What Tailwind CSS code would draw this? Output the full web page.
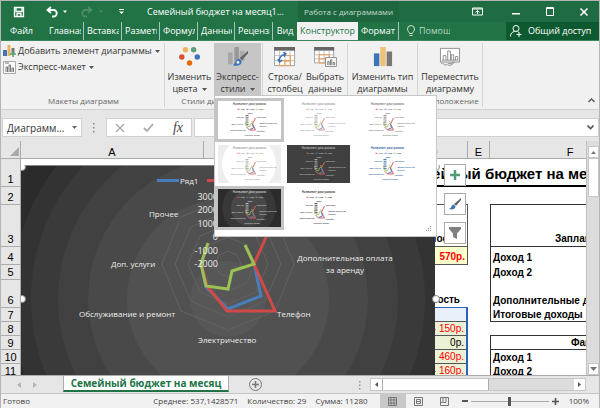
<!DOCTYPE html>
<html lang="ru">

<head>
    <meta charset="UTF-8">
    <meta name="viewport" content="width=device-width, initial-scale=1.0">
    <title>Семейный бюджет на месяц</title>
    <script src="https://cdn.jsdelivr.net/npm/@tailwindcss/browser@4"></script>
</head>

<body class="h-screen flex flex-col overflow-hidden border-t border-x border-[#b5b5b5] bg-[#e6e6e6] font-['Open_Sans',sans-serif] text-[9px] leading-3 text-[#333]">

    <!-- title bar + tabs -->
    <header class="shrink-0 bg-[#217346] text-white">
        <div class="flex h-[21px] items-center">
            <div class="flex w-[146px] shrink-0 items-center pl-3">
                <button aria-label="Сохранить">
                    <svg width="12" height="12" viewBox="0 0 12 12" fill="none" stroke="#fff" stroke-width="1.3">
                        <path d="M1.5 1.5h9v9h-9z M3 1.5v4h6v-4 M4 10.500v-3h4v3" />
                    </svg>
                </button>
                <button aria-label="Отменить" class="ml-5">
                    <svg width="24" height="12" viewBox="0 0 24 12" fill="none" stroke="#fff" stroke-width="1.8">
                        <path d="M6 1 2.500 4l3.500 3M3 4h5.500a3 3 0 0 1 0 6.500H7" />
                        <path d="M18 4.500h4l-2 2.500z" fill="#fff" stroke="none" />
                    </svg>
                </button>
                <button aria-label="Повторить" class="ml-3">
                    <svg width="24" height="12" viewBox="0 0 24 12" fill="none" stroke="#4c8c68" stroke-width="1.8">
                        <path d="M7 1l3.500 3L7 7M10 4H4.500a3 3 0 0 0 0 6.500H6" />
                        <path d="M18 4.500h4l-2 2.500z" fill="#4c8c68" stroke="none" />
                    </svg>
                </button>
                <button aria-label="Настройка панели" class="ml-3">
                    <svg width="8" height="12" viewBox="0 0 8 12" fill="#fff">
                        <path d="M2 3h5v1H2zM2 5.500h5L4.500 8z" />
                    </svg>
                </button>
            </div>
            <h1 class="w-[151px] shrink-0 whitespace-nowrap">Семейный бюджет на месяц1...</h1>
            <div class="flex h-full w-[101px] shrink-0 items-center justify-center whitespace-nowrap bg-[#1e6640] text-[8px] text-[#c3dccd]">Работа с диаграммами</div>
            <div class="flex h-full grow items-center justify-end gap-6 bg-[#1f6b42] pr-[10px]">
                <button aria-label="Параметры отображения ленты">
                    <svg width="11" height="9" viewBox="0 0 11 9" fill="none" stroke="#fff">
                        <path d="M.5 1h10v7H.5zM.5 2h10M5.500 7V4M3.500 5.500l2-2 2 2" />
                    </svg>
                </button>
                <button aria-label="Свернуть" class="ml-1">
                    <svg width="10" height="10" viewBox="0 0 10 10"><path d="M1 6h8v1.500H1z" fill="#fff" /></svg>
                </button>
                <button aria-label="Развернуть">
                    <svg width="10" height="9" viewBox="0 0 10 9" fill="none" stroke="#fff"><path d="M1.500.500h7v8h-7zM1.500 1.500h7" /></svg>
                </button>
                <button aria-label="Закрыть">
                    <svg width="10" height="10" viewBox="0 0 10 10" stroke="#fff" stroke-width="1.6"><path d="M1.500 1.500l7 7M8.500 1.500l-7 7" /></svg>
                </button>
            </div>
        </div>

        <nav class="flex h-[19px] items-stretch whitespace-nowrap border-b border-[#3f8560]">
            <button class="w-[45px] shrink-0 pr-3 pl-2">Файл</button>
            <button class="w-[38px] shrink-0 border-r border-white/60 pr-[2px] pl-[3px] text-left"><span class="block overflow-hidden">Главная</span></button>
            <button class="w-[38px] shrink-0 border-r border-white/60 pr-[2px] pl-[3px] text-left"><span class="block overflow-hidden">Вставка</span></button>
            <button class="w-[38px] shrink-0 border-r border-white/60 pr-[2px] pl-[3px] text-left"><span class="block overflow-hidden">Разметка</span></button>
            <button class="w-[38px] shrink-0 border-r border-white/60 pr-[2px] pl-[3px] text-left"><span class="block overflow-hidden">Формулы</span></button>
            <button class="w-[37px] shrink-0 border-r border-white/60 pr-[2px] pl-[3px] text-left"><span class="block overflow-hidden">Данные</span></button>
            <button class="w-[38px] shrink-0 border-r border-white/60 pr-[2px] pl-[3px] text-left"><span class="block overflow-hidden">Рецензирование</span></button>
            <button class="w-[24px] shrink-0">Вид</button>
            <button class="w-[61px] shrink-0 bg-[#f1f1f1] text-[#217346]">Конструктор</button>
            <button class="w-[41px] shrink-0 border-r border-white/60">Формат</button>
            <button class="flex shrink-0 items-center gap-1 pl-2 text-[#b9d6c6]">
                <svg width="8" height="12" viewBox="0 0 8 12" fill="none" stroke="#cfe3d8">
                    <path d="M2.500 8.500c0-1.500-2-2-2-4.500a3.500 3.500 0 0 1 7 0c0 2.500-2 3-2 4.500zM2.500 10.500h3" />
                </svg>
                <span class="w-[31px] overflow-hidden text-left">Помощь</span>
            </button>
            <button class="ml-auto flex w-[93px] shrink-0 items-center gap-[6px] bg-[#0e5a30] pl-1">
                <svg width="12" height="12" viewBox="0 0 12 12" fill="none" stroke="#fff">
                    <circle cx="6" cy="3.500" r="3" />
                    <path d="M.5 11.500C.5 8.500 2 7 4.500 6.500M7.500 6.500l1 .5M6.500 9.500h5M9 7v5" />
                </svg>
                Общий доступ
            </button>
        </nav>
    </header>

    <!-- ribbon -->
    <section class="relative flex h-[69px] shrink-0 border-b border-[#d2d2d2] bg-[#f1f1f1] py-[2px]">
        <div class="flex w-[164px] shrink-0 flex-col border-r border-[#d5d5d5] pl-[2px]">
            <button class="flex h-4 items-center gap-[2px] whitespace-nowrap">
                <svg class="shrink-0" width="13" height="12" viewBox="0 0 13 12">
                    <path d="M0 5h4v6H0z" fill="#3e74b8" />
                    <path d="M4.500 0h3v11h-3z" fill="#edb35a" />
                    <path d="M8.500 3h3v5h-3z" fill="#777" />
                    <path d="M10 6v6M7 9h6" stroke="#4aa070" stroke-width="1.500" />
                </svg>
                Добавить элемент диаграммы
                <svg class="ml-px shrink-0" width="5" height="3" viewBox="0 0 5 3"><path d="M0 0h5L2.500 3z" fill="#555" /></svg>
            </button>
            <button class="flex h-4 items-center gap-[2px] whitespace-nowrap">
                <svg class="shrink-0" width="13" height="13" viewBox="0 0 13 13">
                    <path d="M.5.500h12v12H.5z" fill="#fafafa" stroke="#aaa" />
                    <path d="M2 2h4M3 11V6h1.500v5M6 11V4h1.500v7M9 11V7h1.500v4" fill="none" stroke="#777" />
                </svg>
                Экспресс-макет
                <svg class="ml-px shrink-0" width="5" height="3" viewBox="0 0 5 3"><path d="M0 0h5L2.500 3z" fill="#555" /></svg>
            </button>
            <p class="mt-auto text-center text-[8px] text-[#666]">Макеты диаграмм</p>
        </div>

        <div class="flex w-[98px] shrink-0 flex-col border-r border-[#d5d5d5]">
            <div class="flex h-[52px]">
                <button class="flex w-[49px] flex-col items-center text-center">
                    <svg class="mt-1 mb-1" width="26" height="22" viewBox="0 0 26 22">
                        <circle cx="8" cy="3" r="3" fill="#edb35a" />
                        <circle cx="17" cy="3" r="3" fill="#5f9f7e" />
                        <circle cx="4" cy="11" r="3" fill="#d9502e" />
                        <circle cx="21" cy="11" r="3" fill="#3e74b8" />
                        <circle cx="12.500" cy="17.500" r="3" fill="#e36c0a" />
                    </svg>
                    Изменить<span class="flex items-center gap-1">цвета <svg width="5" height="3" viewBox="0 0 5 3"><path d="M0 0h5L2.500 3z" fill="#555" /></svg></span>
                </button>
                <button class="flex w-[47px] flex-col items-center whitespace-nowrap bg-[#c6c6c6] text-center">
                    <svg class="mt-1 mb-1" width="24" height="22" viewBox="0 0 24 22">
                        <path d="M1 6h5v13H1z" fill="#a8a8a8" />
                        <path d="M8 0h5v19H8z" fill="#999" />
                        <path d="M14 4h5v11h-5z" fill="#aaa" />
                        <path d="M23 4 14 12l2.500 2.500L23 7z" fill="#666" />
                        <path d="M13.500 13c-4 0-3 4-7 7 4 1.500 10 .5 9.500-4.500z" fill="#3e74b8" />
                        <circle cx="12" cy="17" r="1.500" fill="#fff" />
                    </svg>
                    Экспресс-<span class="flex items-center gap-1">стили <svg width="5" height="3" viewBox="0 0 5 3"><path d="M0 0h5L2.500 3z" fill="#555" /></svg></span>
                </button>
            </div>
            <p class="mt-auto text-center text-[8px] text-[#666]">Стили диаграмм</p>
        </div>

        <div class="flex w-[85px] shrink-0 flex-col border-r border-[#d5d5d5]">
            <div class="flex h-[52px] pl-[2px]">
                <button class="flex w-[40px] flex-col items-center text-center">
                    <svg class="mt-1 mb-1" width="24" height="22" viewBox="0 0 24 22" fill="none">
                        <path d="M.5.500h22v20H.5z" fill="#fff" stroke="#999" />
                        <path d="M0 0h23v4H0z" fill="#666" />
                        <path d="M.5 9.500h22M.5 15h22M6 4v16M12 4v16M17.500 4v16" stroke="#bbb" />
                        <path d="M12 9.500h6v6h-6v5M6 15h12v5.500H6z" stroke="#ec9a4c" />
                        <path d="M6 16c-1-5 2-7 6-8M10 6l3 1.500-2 3M4 13.500l2 3 3-2" stroke="#3e74b8" stroke-width="1.600" />
                    </svg>
                    Строка/ столбец
                </button>
                <button class="flex w-[40px] flex-col items-center text-center">
                    <svg class="mt-1 mb-1" width="25" height="22" viewBox="0 0 25 22" fill="none">
                        <path d="M.5.500h21v17H.5z" fill="#fff" stroke="#999" />
                        <path d="M0 0h22v4H0z" fill="#666" />
                        <path d="M.5 8.500h21M.5 13h21M5.500 4v13M11 4v13M16.500 4v13" stroke="#bbb" />
                        <path d="M5.500 8.500h11v9h-11zM5.500 13H12" stroke="#ec9a4c" />
                        <path d="M12.500 11.500h12v10h-12z" fill="#fafafa" stroke="#888" />
                        <path d="M15 20v-4h1.500v4M18 20v-6h1.500v6M21 20v-3h1.500v3" stroke="#777" />
                    </svg>
                    Выбрать данные
                </button>
            </div>
        </div>

        <div class="flex w-[70px] shrink-0 flex-col border-r border-[#d5d5d5]">
            <button class="flex h-[52px] flex-col items-center text-center">
                <svg class="mt-1 mb-1" width="20" height="22" viewBox="0 0 20 22">
                    <path d="M0 7h6v14H0z" fill="#3e74b8" />
                    <path d="M7 0h6v21H7z" fill="#f0c078" />
                    <path d="M14 5h6v16h-6z" fill="#777" />
                </svg>
                Изменить тип диаграммы
            </button>
        </div>

        <div class="flex w-[65px] shrink-0 flex-col border-r border-[#d5d5d5]">
            <button class="flex h-[52px] flex-col items-center text-center">
                <svg class="mt-1 mb-1" width="22" height="22" viewBox="0 0 22 22" fill="none" stroke="#888">
                    <path d="M.5 1.500h21v15H.5z" fill="#fff" />
                    <path d="M3.500 14.500v-5h3v5M8.500 14.500v-10h3v10M12.500 14.500v-6h2.500v6M17 14.500v-4h2.500v4M2 14.500h18" />
                    <path d="M1 17.500c3 0 3 2.500 6 2.500l2-2h4l2-2M9 20h3l4-3" />
                </svg>
                Переместить диаграмму
            </button>
            <p class="mt-auto text-center text-[8px] text-[#666]">Расположение</p>
        </div>

        <button aria-label="Свернуть ленту" class="mt-auto mr-1 mb-1 ml-auto">
            <svg width="7" height="5" viewBox="0 0 7 5" fill="none" stroke="#555" stroke-width="1.300"><path d="M.5 4l3-3 3 3" /></svg>
        </button>

        <!-- chart style gallery -->
        <div class="absolute top-[54px] left-[213px] z-20 h-[142px] w-[223px] border border-[#c6c6c6] bg-white pt-[2px]">
            <svg class="hidden">
                <symbol id="mini-chart" viewBox="0 0 62 38">
                    <g font-size="2" fill="currentColor" font-family="Open Sans" font-weight="600">
                        <text x="31" y="4" font-size="3" text-anchor="middle">Название диаграммы</text>
                        <text x="22" y="9">Ряд1</text>
                        <text x="31" y="9">Ряд2</text>
                        <text x="40" y="9">Ряд3</text>
                        <text x="29" y="13">Вода</text>
                        <text x="18" y="17">Прочее</text>
                        <text x="38" y="17">Квартира</text>
                        <text x="13" y="24">Доп. услуги</text>
                        <text x="41" y="23">Дополнительная</text>
                        <text x="41" y="26">оплата</text>
                        <text x="12" y="30">Обслуживание</text>
                        <text x="38" y="31">Телефон</text>
                        <text x="26" y="35">Электричество</text>
                    </g>
                    <path d="M28.500 14v11" stroke="currentColor" stroke-width="3" stroke-dasharray="1 .8" opacity=".8" />
                    <g fill="none">
                        <path d="M19 8.300h2M37 17l-3 6 3 6h-6l-3-3" stroke="#d9605c" />
                        <path d="M34 23l1 4-4 1.500" stroke="#4f81bd" />
                        <path d="M27 21l1 4 3 1 1-3 2-1-1-2" stroke="#9bbb59" stroke-width=".8" />
                        <path d="M28 8.300h2" stroke="#4f81bd" stroke-width=".8" />
                        <path d="M37 8.300h2" stroke="#9bbb59" stroke-width=".8" />
                    </g>
                </symbol>
            </svg>
            <div class="grid w-[207px] grid-cols-3">
                <button aria-label="Стиль 1" class="h-11 bg-[#c4c4c4] p-[3px]"><svg class="size-full bg-white text-[#555]"><use href="#mini-chart" /></svg></button>
                <button aria-label="Стиль 2" class="h-11 p-[3px]"><svg class="size-full text-[#777] opacity-70"><use href="#mini-chart" /></svg></button>
                <button aria-label="Стиль 3" class="h-11 p-[3px]"><svg class="size-full text-[#777]"><use href="#mini-chart" /></svg></button>
                <button aria-label="Стиль 4" class="h-11 p-[3px]"><svg class="size-full bg-[#eee] text-[#888]"><circle cx="31" cy="19" r="27" fill="#fff" /><use href="#mini-chart" opacity=".8" /></svg></button>
                <button aria-label="Стиль 5" class="h-11 p-[3px]"><svg class="size-full bg-[#404040] text-[#bbb]"><use href="#mini-chart" /></svg></button>
                <button aria-label="Стиль 6" class="h-11 p-[3px]"><svg class="size-full text-[#1f5c99]"><use href="#mini-chart" /></svg></button>
                <button aria-label="Стиль 7" class="h-11 bg-[#c4c4c4] p-[3px]"><svg class="size-full bg-[#2b2b2b] text-[#ccc]"><circle cx="31" cy="19" r="27" fill="#383838" /><circle cx="31" cy="19" r="18" fill="#484848" /><use href="#mini-chart" /></svg></button>
                <button aria-label="Стиль 8" class="h-11 p-[3px]"><svg class="size-full text-[#333]"><use href="#mini-chart" /></svg></button>
            </div>
            <svg class="absolute right-1 bottom-1" width="6" height="6" viewBox="0 0 6 6" fill="#999"><path d="M4 0h1v1H4zM4 4h1v1H4zM2 2h1v1H2zM0 4h1v1H0zM2 4h1v1H2zM4 2h1v1H4z" /></svg>
        </div>
    </section>

    <!-- formula bar -->
    <section class="flex h-[31px] shrink-0 pt-2 pb-[4px] pl-px">
        <div class="flex h-[19px] w-[80px] shrink-0 items-center border border-[#d0d0d0] bg-white pr-1">
            <input type="text" aria-label="Имя" value="Диаграмм..." class="w-0 grow pl-1 text-[10px] text-[#333]">
            <button aria-label="Список имён"><svg width="5" height="3" viewBox="0 0 5 3"><path d="M0 0h5L2.500 3z" fill="#666" /></svg></button>
        </div>
        <svg class="mx-[9px] shrink-0" width="6" height="19" viewBox="0 0 6 19" fill="#888"><path d="M2 5h1.500v1.500H2zM2 9h1.500v1.500H2zM2 13h1.500v1.500H2z" /></svg>
        <div class="flex h-[19px] w-[86px] shrink-0 items-center justify-between border border-[#d0d0d0] bg-white px-2">
            <button aria-label="Отмена"><svg width="10" height="10" viewBox="0 0 10 10" stroke="#aaa" stroke-width="1.300"><path d="M1 1l8 8M9 1L1 9" /></svg></button>
            <button aria-label="Ввод"><svg width="11" height="9" viewBox="0 0 11 9" fill="none" stroke="#aaa" stroke-width="1.800"><path d="M1 5l3 3 6-7" /></svg></button>
            <button class="font-['Liberation_Serif',serif] text-[14px] italic text-[#444]">fx</button>
        </div>
        <div class="ml-[2px] flex h-[19px] grow items-center border border-[#d0d0d0] bg-white pr-1">
            <input type="text" aria-label="Строка формул" class="w-0 grow">
            <button aria-label="Развернуть строку формул"><svg width="7" height="5" viewBox="0 0 7 5" fill="none" stroke="#555" stroke-width="1.600"><path d="M.5.500l3 3 3-3" /></svg></button>
        </div>
    </section>

    <!-- sheet -->
    <main class="flex min-h-0 grow">
        <div class="relative min-w-0 grow overflow-hidden bg-white font-['Liberation_Sans',sans-serif] text-[10px] text-black">
            <table class="w-full table-fixed border-separate border-spacing-0 whitespace-nowrap">
                <colgroup>
                    <col class="w-[20px]">
                    <col class="w-[183px]">
                    <col class="w-[106px]">
                    <col class="w-[90px]">
                    <col class="w-[68px]">
                    <col class="w-[22px]">
                    <col>
                </colgroup>
                <thead>
                    <tr class="h-[18px] bg-[#e6e6e6] text-[11px] *:border-b *:border-[#ababab] *:p-0 *:pt-1 *:font-normal">
                        <th class="border-r"><svg class="ml-auto" width="10" height="9" viewBox="0 0 10 9"><path d="M9 0v9H0z" fill="#aaa" /></svg></th>
                        <th class="border-r">A</th>
                        <th class="border-r">B</th>
                        <th class="border-r">C</th>
                        <th class="border-r">D</th>
                        <th class="border-r">E</th>
                        <th class="pl-16!">F</th>
                    </tr>
                </thead>
                <tbody class="align-bottom font-bold">
                    <tr class="h-[28px] *:p-0 *:pb-px">
                        <th class="border-r border-b border-[#ababab] bg-[#e6e6e6] text-[11px] font-normal">1</th>
                        <td colspan="3" class="border-b-2"></td>
                        <td class="border-b-2 pl-[2px]! text-[15px] leading-5">Семейный бюджет на месяц</td>
                        <td class="border-b-2"></td>
                        <td class="border-b-2"></td>
                    </tr>
                    <tr class="h-[18px] *:p-0 *:pb-px">
                        <th class="border-r border-b border-[#ababab] bg-[#e6e6e6] text-[11px] font-normal">2</th>
                        <td colspan="3"></td>
                        <td class="border-b border-[#555]"></td>
                        <td></td>
                        <td class="border-b border-[#333]"></td>
                    </tr>
                    <tr class="h-[42px] *:p-0 *:pb-px">
                        <th class="border-r border-b border-[#ababab] bg-[#e6e6e6] text-[11px] font-normal">3</th>
                        <td colspan="3"></td>
                        <td class="border-r border-b border-[#555] pr-2! text-right">Разность</td>
                        <td></td>
                        <td class="border-b border-l border-[#333] pl-16!">Запланировано</td>
                    </tr>
                    <tr class="h-[18px] *:p-0 *:pb-px">
                        <th class="border-r border-b border-[#ababab] bg-[#e6e6e6] text-[11px] font-normal">4</th>
                        <td colspan="3"></td>
                        <td class="border-r border-b border-[#555] bg-[#ffffcc] pr-[2px]! text-right text-[#f00]">570р.</td>
                        <td></td>
                        <td class="border-l border-[#333] pl-[2px]!">Доход 1</td>
                    </tr>
                    <tr class="h-[15px] *:p-0 *:pb-px">
                        <th class="border-r border-b border-[#ababab] bg-[#e6e6e6] text-[11px] font-normal">5</th>
                        <td colspan="3"></td>
                        <td></td>
                        <td></td>
                        <td class="border-l border-[#333] pl-[2px]!">Доход 2</td>
                    </tr>
                    <tr class="h-[28px] *:p-0 *:pb-px">
                        <th class="border-r border-b border-[#ababab] bg-[#e6e6e6] text-[11px] font-normal">6</th>
                        <td colspan="3"></td>
                        <td class="border-b border-[#2a62c4] pr-2! text-right">Разность</td>
                        <td></td>
                        <td class="border-l border-[#333] pl-[2px]!">Дополнительные доходы</td>
                    </tr>
                    <tr class="h-[14px] *:p-0">
                        <th class="border-r border-b border-[#ababab] bg-[#e6e6e6] text-[11px] font-normal">7</th>
                        <td colspan="3"></td>
                        <td class="border-r-2 border-b border-r-[#2a62c4] border-b-[#555] bg-[#e9f0fa]"></td>
                        <td></td>
                        <td class="border-b border-l border-[#333] pl-[2px]!">Итоговые доходы</td>
                    </tr>
                    <tr class="h-[14px] *:p-0">
                        <th class="border-r border-b border-[#ababab] bg-[#e6e6e6] text-[11px] font-normal">8</th>
                        <td colspan="3"></td>
                        <td class="border-r-2 border-b border-r-[#2a62c4] border-b-[#555] bg-[#ebf1d5] pr-[2px]! text-right font-normal text-[#f00]">- 150р.</td>
                        <td></td>
                        <td class="border-b border-[#333]"></td>
                    </tr>
                    <tr class="h-[14px] *:p-0">
                        <th class="border-r border-b border-[#ababab] bg-[#e6e6e6] text-[11px] font-normal">9</th>
                        <td colspan="3"></td>
                        <td class="border-r-2 border-b border-r-[#2a62c4] border-b-[#555] bg-[#ebf1d5] pr-[2px]! text-right font-normal">0р.</td>
                        <td></td>
                        <td class="border-b border-l border-[#333] pl-20!">Фактически</td>
                    </tr>
                    <tr class="h-[14px] *:p-0">
                        <th class="border-r border-b border-[#ababab] bg-[#e6e6e6] text-[11px] font-normal">10</th>
                        <td colspan="3"></td>
                        <td class="border-r-2 border-b border-r-[#2a62c4] border-b-[#555] bg-[#ebf1d5] pr-[2px]! text-right font-normal text-[#f00]">460р.</td>
                        <td></td>
                        <td class="border-l border-[#333] pl-[2px]!">Доход 1</td>
                    </tr>
                    <tr class="h-[14px] *:p-0">
                        <th class="border-r border-b border-[#ababab] bg-[#e6e6e6] text-[11px] font-normal">11</th>
                        <td colspan="3"></td>
                        <td class="border-r-2 border-b border-r-[#2a62c4] border-b-[#555] bg-[#ebf1d5] pr-[2px]! text-right font-normal text-[#f00]">- 160р.</td>
                        <td></td>
                        <td class="border-l border-[#333] pl-[2px]!">Доход 2</td>
                    </tr>
                </tbody>
            </table>

            <!-- radar chart lying over the cells -->
            <svg class="absolute top-[24px] left-[20px]" width="420" height="270" viewBox="0 0 420 270" fill="none" font-family="Open Sans" font-size="8">
                <svg width="414" height="270">
                    <path d="M0 0h414v270H0z" fill="#2b2b2b" />
                    <circle cx="207" cy="134" r="217" fill="#333" />
                    <circle cx="207" cy="134" r="197" fill="#3a3a3a" />
                    <circle cx="207" cy="134" r="170" fill="#414141" />
                    <circle cx="207" cy="134" r="140" fill="#494949" />
                    <circle cx="207" cy="134" r="101" fill="#515151" />
                    <circle cx="207" cy="134" r="38" fill="#575757" />
                    <path d="M0 .5h414" stroke="#888" />
                    <g stroke="#626262">
                        <path d="M207 33l47 19 19 47-19 47-47 19-47-19-19-47 19-47z" />
                        <path d="M207 46l37 16 16 37-16 37-37 16-37-16-16-37 16-37z" />
                        <path d="M207 59l28 12 12 28-12 28-28 12-28-12-12-28 12-28z" />
                        <path d="M207 72l19 8 8 19-8 19-19 8-19-8-8-19 8-19z" />
                        <path d="M207 86l9 4 4 9-4 9-9 4-9-4-4-9 4-9z" />
                    </g>
                    <g stroke-width="3">
                        <path d="M233 99l7 32-33 13-22-22-5-23" stroke="#4a7ebb" />
                        <path d="M254 52l-21 47 21 47h-48l-20-25-6-22" stroke="#cf4a48" />
                        <path d="M187 78l-7 21 5 22 22 3 4-18 22-7-9-19" stroke="#9bc253" />
                        <path d="M136 15.500h22" stroke="#4a7ebb" />
                        <path d="M186 15.500h22" stroke="#cf4a48" />
                    </g>
                    <g fill="#eee">
                        <text x="159" y="19">Ряд1</text>
                        <text x="128" y="52">Прочее</text>
                        <text x="90" y="102">Доп. услуги</text>
                        <text x="58" y="152">Обслуживание и ремонт</text>
                        <text x="177" y="178">Электричество</text>
                        <text x="256" y="152">Телефон</text>
                        <text x="324" y="96" text-anchor="middle">Дополнительная оплата</text>
                        <text x="324" y="108" text-anchor="middle">за аренду</text>
                        <g text-anchor="end" font-size="9">
                            <text x="197" y="35">3000</text>
                            <text x="197" y="48">2000</text>
                            <text x="197" y="62">1000</text>
                            <text x="197" y="75">0</text>
                            <text x="197" y="89">-1000</text>
                            <text x="197" y="102">-2000</text>
                        </g>
                    </g>
                </svg>
                <g fill="#fff" stroke="#888">
                    <circle cx="1" cy="2" r="3.500" />
                    <circle cx="1" cy="134" r="3.500" />
                    <circle cx="415" cy="2" r="3.500" />
                    <circle cx="415" cy="134" r="3.500" />
                </g>
            </svg>

            <div class="absolute top-[23px] left-[443px] flex flex-col gap-[7px]">
                <button aria-label="Элементы диаграммы" class="grid size-[22px] place-items-center border border-[#ababab] bg-white">
                    <svg width="10" height="10" viewBox="0 0 10 10" stroke="#4f9d74" stroke-width="2.500"><path d="M5 0v10M0 5h10" /></svg>
                </button>
                <button aria-label="Стили диаграмм" class="grid size-[22px] place-items-center border border-[#ababab] bg-white">
                    <svg width="12" height="12" viewBox="0 0 12 12"><path d="M12 0 5 6l2 2 5-6z" fill="#666" /><path d="M4.500 6.500C2 7 3 10 0 11c3 1 6.500 0 6.500-2.500z" fill="#3e74b8" /></svg>
                </button>
                <button aria-label="Фильтры диаграммы" class="grid size-[22px] place-items-center border border-[#ababab] bg-white">
                    <svg width="12" height="12" viewBox="0 0 12 12"><path d="M0 0h12v2L8 6.500V12l-4-2V6.500L0 2z" fill="#808080" /></svg>
                </button>
            </div>
        </div>

        <div class="flex w-[13px] shrink-0 flex-col border-l border-[#c0c0c0] bg-[#dcdcdc] pt-[5px] pl-px">
            <button aria-label="Вверх" class="grid h-[12px] shrink-0 place-items-center border border-[#c6c6c6] bg-white"><svg width="5" height="3" viewBox="0 0 5 3"><path d="M0 3h5L2.500 0z" fill="#777" /></svg></button>
            <div class="h-[39px] shrink-0 border border-[#c6c6c6] bg-white"></div>
            <button aria-label="Вниз" class="mt-auto grid h-[12px] shrink-0 place-items-center border border-[#c6c6c6] bg-white"><svg width="7" height="4" viewBox="0 0 7 4"><path d="M0 0h7L3.500 4z" fill="#777" /></svg></button>
        </div>
    </main>

    <!-- sheet tabs -->
    <section class="flex h-[18px] shrink-0 items-center border-t border-[#ababab]">
        <div class="flex w-[62px] shrink-0 items-center gap-3 pl-4">
            <button aria-label="Назад"><svg width="4" height="6" viewBox="0 0 4 6"><path d="M4 0v6L0 3z" fill="#b5b5b5" /></svg></button>
            <button aria-label="Вперёд"><svg width="4" height="6" viewBox="0 0 4 6"><path d="M0 0v6l4-3z" fill="#b5b5b5" /></svg></button>
        </div>
        <button class="mb-px w-[166px] shrink-0 self-stretch whitespace-nowrap border-x border-b-2 border-x-[#ababab] border-b-[#217346] bg-white text-[10px] font-bold text-[#217346]">Семейный бюджет на месяц</button>
        <button aria-label="Новый лист" class="ml-5">
            <svg width="13" height="13" viewBox="0 0 13 13" fill="none" stroke="#777"><circle cx="6.500" cy="6.500" r="6" /><path d="M6.500 3v7M3 6.500h7" stroke-width="1.500" /></svg>
        </button>
        <svg class="mr-2 ml-auto shrink-0" width="4" height="10" viewBox="0 0 4 10" fill="#999"><path d="M1 1h1.500v1.500H1zM1 4.500h1.500V6H1zM1 8h1.500v1.500H1z" /></svg>
        <div class="mr-[13px] flex h-[13px] w-[216px] shrink-0 border border-[#c6c6c6] bg-[#dcdcdc]">
            <button aria-label="Влево" class="grid w-[11px] place-items-center bg-white"><svg width="3" height="5" viewBox="0 0 3 5"><path d="M3 0v5L0 2.500z" fill="#555" /></svg></button>
            <div class="w-[107px] border-x border-[#ababab] bg-white"></div>
            <button aria-label="Вправо" class="ml-auto grid w-[11px] place-items-center bg-white"><svg width="3" height="5" viewBox="0 0 3 5"><path d="M0 0v5l3-2.500z" fill="#555" /></svg></button>
        </div>
    </section>

    <!-- status bar -->
    <footer class="flex h-[15px] shrink-0 items-center whitespace-nowrap border-t border-[#c6c6c6] bg-[#f1f1f1] text-[8px] text-[#444]">
        <span class="pl-[2px]">Готово</span>
        <div class="ml-auto flex items-center gap-[9px] pr-3">
            <span>Среднее: 537,1428571</span>
            <span>Количество: 29</span>
            <span>Сумма: 11280</span>
        </div>
        <button aria-label="Обычный" class="grid h-full w-[26px] place-items-center bg-[#c8c8c8]"><svg width="9" height="9" viewBox="0 0 9 9" fill="none" stroke="#777"><path d="M.5.500h8v8h-8zM.5 3h8M.5 6h8M3 .5v8M6 .5v8" /></svg></button>
        <button aria-label="Разметка страницы" class="grid w-[26px] place-items-center"><svg width="9" height="9" viewBox="0 0 9 9" fill="none" stroke="#777"><path d="M.5.500h8v8h-8zM2.500 2.500h4v4h-4zM2 4.500h5" /></svg></button>
        <button aria-label="Страничный" class="grid w-[26px] place-items-center"><svg width="9" height="9" viewBox="0 0 9 9" fill="none" stroke="#777"><path d="M.5.500h8v8h-8zM3 .5v5h3v-5M.5 5.500h2" /></svg></button>
        <button aria-label="Уменьшить" class="ml-1"><svg width="6" height="6" viewBox="0 0 6 6"><path d="M0 2h6v2H0z" fill="#555" /></svg></button>
        <input type="range" aria-label="Масштаб" min="0" max="100" value="50" class="mx-[3px] h-px w-[78px] appearance-none bg-[#aaa] [&::-webkit-slider-thumb]:h-[9px] [&::-webkit-slider-thumb]:w-[3px] [&::-webkit-slider-thumb]:appearance-none [&::-webkit-slider-thumb]:bg-[#555]">
        <button aria-label="Увеличить"><svg width="7" height="7" viewBox="0 0 7 7" stroke="#555" stroke-width="1.600"><path d="M0 3.500h7M3.500 0v7" /></svg></button>
        <span class="mr-[10px] ml-[10px]">100%</span>
    </footer>
</body>

</html>
